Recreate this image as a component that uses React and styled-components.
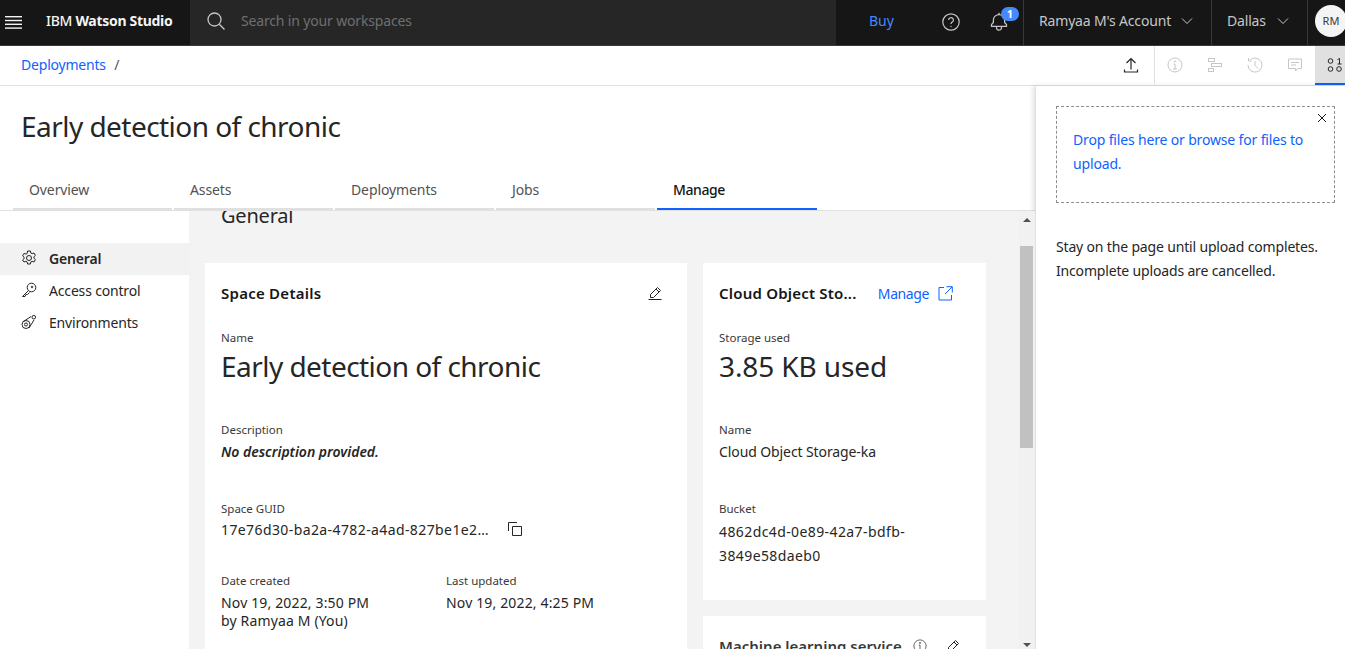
import React from "react";
import styled, { createGlobalStyle } from "styled-components";

const GlobalStyle = createGlobalStyle`
  html, body {
    margin: 0;
    height: 100%;
    overflow: hidden;
    background: #fff;
  }
  body {
    font-family: "Noto Sans", "Open Sans", Arial, sans-serif;
    color: #161616;
  }
  * { box-sizing: border-box; }
`;

const Page = styled.div`
  width: 1345px;
  height: 649px;
  display: flex;
  flex-direction: column;
  overflow: hidden;
`;

const TopBar = styled.header`
  height: 46px;
  flex: none;
  display: flex;
  background: #161616;
  border-bottom: 1px solid #393939;
  color: #f4f4f4;
  font-size: 14px;
`;

const Brand = styled.div`
  width: 190px;
  display: flex;
  align-items: center;
  padding-left: 5px;
  gap: 24px;
  white-space: nowrap;
  font-size: 14px;
  letter-spacing: -0.3px;
  b { font-weight: 700; }
  span { font-weight: 500; padding-bottom: 4px; }
`;

const SearchBox = styled.div`
  width: 646px;
  background: #262626;
  display: flex;
  align-items: center;
  padding: 0 0 4px 17px;
  gap: 16px;
  color: #6f6f6f;
  font-size: 14px;
  letter-spacing: -0.16px;
`;

const BuyLink = styled.a`
  margin-left: 33px;
  width: 58px;
  color: #4589ff;
  font-size: 14px;
  line-height: 41px;
`;

const HeadIcon = styled.div`
  width: 48px;
  position: relative;
  display: flex;
  align-items: center;
  justify-content: center;
  color: #c6c6c6;
  padding-bottom: 1px;
`;

const Badge = styled.span`
  position: absolute;
  top: 7px;
  left: 26px;
  width: 18px;
  height: 14px;
  border-radius: 7px;
  background: #4589ff;
  color: #fff;
  font-size: 11px;
  font-weight: 700;
  line-height: 14px;
  text-align: center;
`;

const HeadMenu = styled.div`
  display: flex;
  align-items: center;
  justify-content: space-between;
  width: ${(p) => p.$width}px;
  padding: 0 16px 4px 15px;
  border-left: 1px solid #393939;
  color: #c6c6c6;
  font-size: 14px;
  letter-spacing: -0.17px;
  white-space: nowrap;
`;

const AvatarCell = styled.div`
  border-left: 1px solid #393939;
  padding: 5px 0 0 7px;
  flex: 1;
  min-width: 0;
  overflow: hidden;
`;

const Avatar = styled.div`
  width: 32px;
  height: 32px;
  border-radius: 50%;
  background: #f4f4f4;
  color: #393939;
  font-size: 11px;
  line-height: 32px;
  text-align: center;
`;

const SubBar = styled.div`
  height: 40px;
  flex: none;
  display: flex;
  align-items: stretch;
  justify-content: space-between;
  border-bottom: 1px solid #e0e0e0;
  overflow: hidden;
`;

const Crumbs = styled.div`
  padding: 9px 0 0 21px;
  font-size: 14px;
  color: #525252;
  letter-spacing: -0.2px;
  a { color: #0f62fe; margin-right: 5px; }
`;

const ToolGroup = styled.div`
  display: flex;
  flex: none;
  margin-right: -10px;
`;

const ToolButton = styled.div`
  width: 40px;
  flex: none;
  display: flex;
  align-items: center;
  justify-content: center;
  color: ${(p) => (p.$muted ? "#c6c6c6" : "#262626")};
  background: ${(p) => (p.$active ? "#e0e0e0" : "transparent")};
  border-bottom: 2px solid ${(p) => (p.$active ? "#0f62fe" : "transparent")};
`;

const UploadButton = styled(ToolButton)`
  width: 44px;
  padding-right: 3px;
  border-right: 1px solid #e0e0e0;
`;

const Body = styled.div`
  flex: 1;
  min-height: 0;
  display: flex;
`;

const Main = styled.main`
  width: 1035px;
  flex: none;
  display: flex;
  flex-direction: column;
  min-height: 0;
`;

const Title = styled.h1`
  margin: 0;
  padding: 20px 0 0 21px;
  height: 94px;
  font-size: 28px;
  line-height: 40px;
  font-weight: 400;
  letter-spacing: -0.54px;
  flex: none;
  color: #262626;
`;

const Tabs = styled.nav`
  height: 31px;
  flex: none;
  display: flex;
  gap: 2px;
  padding-left: 13px;
  border-bottom: 1px solid #e0e0e0;
`;

const Tab = styled.div`
  width: ${(p) => (p.$active ? 160 : 159)}px;
  height: 30px;
  padding-left: 16px;
  font-size: 14px;
  line-height: 20px;
  letter-spacing: ${(p) => (p.$active ? "-0.4px" : "-0.1px")};
  color: ${(p) => (p.$active ? "#161616" : "#525252")};
  font-weight: ${(p) => (p.$active ? 500 : 400)};
  border-bottom: 2px solid ${(p) => (p.$active ? "#0f62fe" : "#e0e0e0")};
`;

const Workspace = styled.div`
  flex: 1;
  min-height: 0;
  display: flex;
`;

const SideNav = styled.aside`
  width: 189px;
  flex: none;
  padding-top: 32px;
`;

const NavItem = styled.div`
  height: 32px;
  display: flex;
  align-items: center;
  gap: 12px;
  padding: 0 0 2px 21px;
  font-size: 14px;
  letter-spacing: -0.17px;
  color: #262626;
  font-weight: ${(p) => (p.$active ? 600 : 400)};
  background: ${(p) => (p.$active ? "#f2f2f2" : "transparent")};
`;

const Content = styled.div`
  flex: 1;
  min-width: 0;
  background: #f3f3f3;
  padding-left: 16px;
  overflow: hidden;
`;

const Heading = styled.h2`
  margin: -7px 0 0 16px;
  height: 59px;
  font-size: 20px;
  line-height: 24px;
  font-weight: 400;
  letter-spacing: -0.2px;
  color: #262626;
`;

const CardGrid = styled.div`
  display: grid;
  grid-template-columns: 482px 283px;
  gap: 16px;
  align-items: start;
`;

const Column = styled.div`
  display: flex;
  flex-direction: column;
  gap: 16px;
`;

const Card = styled.section`
  background: #fff;
  padding: 20px 16px 0;
  height: ${(p) => p.$height}px;
`;

const CardHead = styled.div`
  display: flex;
  align-items: center;
  justify-content: space-between;
  height: 20px;
  margin-bottom: 27px;
  padding-right: ${(p) => p.$inset || 0}px;
  white-space: nowrap;
  color: #262626;
`;

const CardTitle = styled.h3`
  margin: 0;
  font-size: 15px;
  font-weight: 600;
  line-height: 20px;
  letter-spacing: ${(p) => p.$spacing || "0.25px"};
  color: ${(p) => p.$color || "#161616"};
`;

const Label = styled.div`
  font-size: 11.5px;
  line-height: 16px;
  color: #393939;
  margin-bottom: ${(p) => p.$gap}px;
`;

const BigValue = styled.div`
  font-size: 28px;
  line-height: 36px;
  height: 74px;
  letter-spacing: ${(p) => p.$spacing || "-0.54px"};
  color: #262626;
`;

const Field = styled.div`
  height: ${(p) => p.$height}px;
`;

const Value = styled.div`
  font-size: 14px;
  line-height: ${(p) => p.$line || 18}px;
  color: #262626;
  letter-spacing: ${(p) => p.$spacing || "0.15px"};
  font-style: ${(p) => (p.$note ? "italic" : "normal")};
  font-weight: ${(p) => (p.$note ? 600 : 400)};
`;

const GuidRow = styled.div`
  display: flex;
  align-items: center;
  height: 24px;
  font-size: 14px;
  color: #262626;
  letter-spacing: 0.4px;
  white-space: nowrap;
  gap: 18px;
`;

const DateRow = styled.div`
  display: grid;
  grid-template-columns: 225px 1fr;
`;

const ManageLink = styled.a`
  display: flex;
  align-items: center;
  gap: 9px;
  color: #0f62fe;
  font-size: 14px;
  letter-spacing: -0.4px;
  font-weight: 400;
`;

const TitleGroup = styled.div`
  display: flex;
  align-items: center;
  gap: 11px;
  color: #525252;
`;

const Scrollbar = styled.div`
  width: 16px;
  flex: none;
  background: #f1f1f1;
  display: flex;
  flex-direction: column;
  align-items: center;
  justify-content: space-between;
  padding: 7px 0 2px;
  position: relative;
`;

const ScrollThumb = styled.div`
  position: absolute;
  top: 35px;
  left: 1px;
  width: 13px;
  height: 202px;
  background: #c1c1c1;
`;

const Arrow = styled.div`
  width: 0;
  height: 0;
  border-left: 4px solid transparent;
  border-right: 4px solid transparent;
  border-${(p) => (p.$up ? "bottom" : "top")}: 4px solid #505050;
`;

const Panel = styled.aside`
  flex: 1;
  min-width: 0;
  padding: 20px 10px 0 20px;
  box-shadow: -2px 0 5px rgba(0, 0, 0, 0.12);
  border-left: 1px solid #e0e0e0;
`;

const DropZone = styled.div`
  position: relative;
  height: 97px;
  border: 1px dashed #8d8d8d;
  padding: 21px 16px 0;
  font-size: 14px;
  line-height: 24px;
  letter-spacing: -0.16px;
  color: #0f62fe;
  margin-bottom: 33px;
`;

const CloseIcon = styled.svg`
  position: absolute;
  top: 6px;
  right: 7px;
`;

const PanelNote = styled.p`
  margin: -1px 0 0;
  font-size: 14px;
  line-height: 24px;
  letter-spacing: -0.165px;
  color: #262626;
`;

const Icon = ({ size = 16, children, stroke = 1 }) => (
  <svg
    width={size}
    height={size}
    viewBox="0 0 16 16"
    fill="none"
    stroke="currentColor"
    strokeWidth={stroke}
  >
    {children}
  </svg>
);

const Chevron = () => (
  <Icon size={16}>
    <path d="M3 5.500l5 5 5-5" />
  </Icon>
);

const Pencil = () => (
  <Icon>
    <path d="M1.500 14.500h13M3.500 12.500v-3L10.500 2.500l3 3-7 7zM9 4l3 3" />
  </Icon>
);

const InfoCircle = ({ size = 16 }) => (
  <Icon size={size}>
    <circle cx="8" cy="8" r="7" />
    <path d="M6 12h4M8 12V7H6.500" />
    <circle cx="8" cy="4.500" r="0.600" fill="currentColor" />
  </Icon>
);

const App = () => {
  return (
    <Page>
      <GlobalStyle />
      <TopBar>
        <Brand>
          <svg width="17" height="13" viewBox="0 0 17 13" fill="#f4f4f4">
            <rect y="0" width="17" height="1.400" />
            <rect y="3.800" width="17" height="1.400" />
            <rect y="7.600" width="17" height="1.400" />
            <rect y="11.400" width="17" height="1.400" />
          </svg>
          <span>
            IBM <b>Watson Studio</b>
          </span>
        </Brand>
        <SearchBox>
          <svg width="18" height="18" viewBox="0 0 18 18" fill="none" stroke="#c6c6c6" strokeWidth="1.300">
            <circle cx="7.500" cy="7.500" r="6.500" />
            <path d="M12.300 12.300L17.500 17.500" />
          </svg>
          Search in your workspaces
        </SearchBox>
        <BuyLink>Buy</BuyLink>
        <HeadIcon>
          <svg width="18" height="18" viewBox="0 0 18 18" fill="none" stroke="currentColor" strokeWidth="1.200">
            <circle cx="9" cy="9" r="8.200" />
            <path d="M6.600 7a2.400 2.400 0 1 1 3.600 2.100c-.8.500-1.200.900-1.200 1.900" />
            <circle cx="9" cy="13.400" r="0.700" fill="currentColor" stroke="none" />
          </svg>
        </HeadIcon>
        <HeadIcon>
          <svg width="20" height="20" viewBox="0 0 32 32" fill="currentColor">
            <path d="M28.707,19.293,26,16.586V13a10.014,10.014,0,0,0-9-9.950V1H15V3.050A10.014,10.014,0,0,0,6,13v3.586L3.293,19.293A1,1,0,0,0,3,20v3a1,1,0,0,0,1,1h7v.777a5.152,5.152,0,0,0,4.500,5.199A5.006,5.006,0,0,0,21,25V24h7a1,1,0,0,0,1-1V20A1,1,0,0,0,28.707,19.293ZM19,25a3,3,0,0,1-6,0V24h6Zm8-3H5V20.414L7.707,17.707A1,1,0,0,0,8,17V13a8,8,0,0,1,16,0v4a1,1,0,0,0,.293.707L27,20.414Z" />
          </svg>
          <Badge>1</Badge>
        </HeadIcon>
        <HeadMenu $width={188}>
          Ramyaa M's Account <Chevron />
        </HeadMenu>
        <HeadMenu $width={96}>
          Dallas <Chevron />
        </HeadMenu>
        <AvatarCell>
          <Avatar>RM</Avatar>
        </AvatarCell>
      </TopBar>

      <SubBar>
        <Crumbs>
          <a>Deployments</a> /
        </Crumbs>
        <ToolGroup>
          <UploadButton>
            <svg width="16" height="16" viewBox="0 0 16 16" fill="none" stroke="currentColor" strokeWidth="1.200">
              <path d="M8 12.500V1.500M3.500 6l4.500-4.500L12.500 6M1.500 12.500v2.500h13v-2.500" />
            </svg>
          </UploadButton>
          <ToolButton $muted>
            <InfoCircle />
          </ToolButton>
          <ToolButton $muted>
            <Icon>
              <rect x="1.500" y="1.500" width="6" height="3" />
              <rect x="4.500" y="6.500" width="10" height="3" />
              <rect x="1.500" y="11.500" width="5" height="3" />
            </Icon>
          </ToolButton>
          <ToolButton $muted>
            <Icon>
              <path d="M3 3.200A7 7 0 1 1 1 8M1.500 1v3h3M8 4v4.500l3 3" />
            </Icon>
          </ToolButton>
          <ToolButton $muted>
            <Icon>
              <path d="M1.500 2h13v9.500h-4l-2 2.500v-2.500H1.500zM4 5.500h8M4 8h5" />
            </Icon>
          </ToolButton>
          <ToolButton $active>
            <Icon>
              <circle cx="3.500" cy="4" r="2.300" />
              <path d="M10.500 2.500l2-1V7M10.500 7h4" />
              <circle cx="3.500" cy="12" r="2.300" />
              <circle cx="12" cy="12" r="2.300" />
            </Icon>
          </ToolButton>
        </ToolGroup>
      </SubBar>

      <Body>
        <Main>
          <Title>Early detection of chronic</Title>
          <Tabs>
            <Tab>Overview</Tab>
            <Tab>Assets</Tab>
            <Tab>Deployments</Tab>
            <Tab>Jobs</Tab>
            <Tab $active>Manage</Tab>
          </Tabs>
          <Workspace>
            <SideNav>
              <NavItem $active>
                <Icon>
                  <path d="M6.600 1h2.800l.4 2 1.300.7 1.900-.7 1.400 2.400-1.500 1.400v1.400l1.500 1.400-1.400 2.400-1.900-.7-1.300.7-.4 2H6.600l-.4-2-1.300-.7-1.900.7L1.600 10l1.500-1.400V7.200L1.600 5.800 3 3.400l1.900.7L6.200 3.400z" />
                  <circle cx="8" cy="8" r="2.500" />
                </Icon>
                General
              </NavItem>
              <NavItem>
                <Icon>
                  <circle cx="10.500" cy="5.500" r="4.300" />
                  <path d="M7.500 8.500L1.500 14.500H4L5 12.500h1.500L8.500 10.500" />
                  <circle cx="11" cy="5" r="0.800" />
                </Icon>
                Access control
              </NavItem>
              <NavItem>
                <Icon>
                  <circle cx="5" cy="10.500" r="4" />
                  <circle cx="5" cy="10.500" r="1.500" />
                  <path d="M2.500 7.500L10 2.500M8 14L13 6" />
                  <circle cx="12.800" cy="3.200" r="1.800" />
                </Icon>
                Environments
              </NavItem>
            </SideNav>
            <Content>
              <Heading>General</Heading>
              <CardGrid>
                <Card $height={420}>
                  <CardHead $inset={8}>
                    <CardTitle>Space Details</CardTitle>
                    <Pencil />
                  </CardHead>
                  <Label $gap={2}>Name</Label>
                  <BigValue>Early detection of chronic</BigValue>
                  <Field $height={79}>
                    <Label $gap={5}>Description</Label>
                    <Value $note $spacing="-0.02px">No description provided.</Value>
                  </Field>
                  <Field $height={72}>
                    <Label $gap={0}>Space GUID</Label>
                    <GuidRow>
                      17e76d30-ba2a-4782-a4ad-827be1e2…
                      <Icon>
                        <path d="M5.500 5.500h9v9h-9zM1.500 10V1.500H10" />
                      </Icon>
                    </GuidRow>
                  </Field>
                  <DateRow>
                    <div>
                      <Label $gap={5}>Date created</Label>
                      <Value>Nov 19, 2022, 3:50 PM</Value>
                      <Value>by Ramyaa M (You)</Value>
                    </div>
                    <div>
                      <Label $gap={5}>Last updated</Label>
                      <Value>Nov 19, 2022, 4:25 PM</Value>
                    </div>
                  </DateRow>
                </Card>
                <Column>
                  <Card $height={337}>
                    <CardHead $inset={17}>
                      <CardTitle $spacing="0.2px">Cloud Object Sto...</CardTitle>
                      <ManageLink>
                        Manage
                        <svg width="15" height="15" viewBox="0 0 15 15" fill="none" stroke="currentColor">
                          <path d="M6 1.500H1v12.500h12.500V9M8.500.700h5.800v5.800M14 1L7 8" />
                        </svg>
                      </ManageLink>
                    </CardHead>
                    <Label $gap={2}>Storage used</Label>
                    <BigValue $spacing="-0.1px">3.85 KB used</BigValue>
                    <Field $height={79}>
                      <Label $gap={5}>Name</Label>
                      <Value $spacing="-0.1px">Cloud Object Storage-ka</Value>
                    </Field>
                    <Field>
                      <Label $gap={2}>Bucket</Label>
                      <GuidRow>4862dc4d-0e89-42a7-bdfb-</GuidRow>
                      <GuidRow>3849e58daeb0</GuidRow>
                    </Field>
                  </Card>
                  <Card $height={100}>
                    <CardHead $inset={9}>
                      <TitleGroup>
                        <CardTitle $color="#393939" $spacing="0">Machine learning service</CardTitle>
                        <InfoCircle size={14} />
                      </TitleGroup>
                      <Pencil />
                    </CardHead>
                  </Card>
                </Column>
              </CardGrid>
            </Content>
            <Scrollbar>
              <Arrow $up />
              <ScrollThumb />
              <Arrow />
            </Scrollbar>
          </Workspace>
        </Main>
        <Panel>
          <DropZone>
            <CloseIcon width="10" height="10" viewBox="0 0 10 10" fill="none" stroke="#161616">
              <path d="M1 1l8 8M9 1l-8 8" />
            </CloseIcon>
            Drop files here or browse for files to upload.
          </DropZone>
          <PanelNote>
            Stay on the page until upload completes. Incomplete uploads are cancelled.
          </PanelNote>
        </Panel>
      </Body>
    </Page>
  );
};

export default App;
